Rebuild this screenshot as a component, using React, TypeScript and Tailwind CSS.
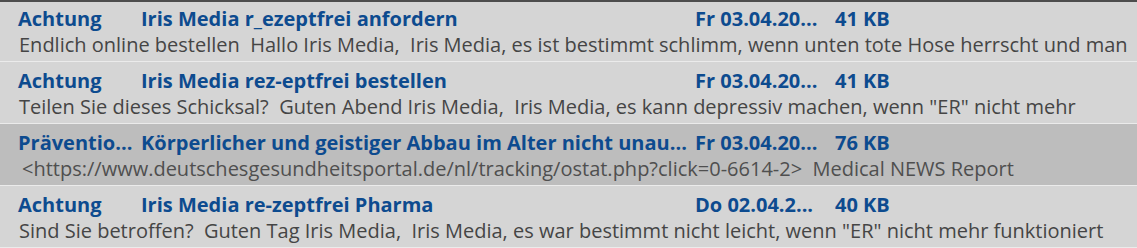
import React from 'react';

type Mail = {
  from: string;
  subject: string;
  date: string;
  size: string;
  preview: string;
  selected?: boolean;
};

const MAILS: Mail[] = [
  {
    from: 'Achtung',
    subject: 'Iris Media r_ezeptfrei anfordern',
    date: 'Fr 03.04.20...',
    size: '41 KB',
    preview:
      'Endlich online bestellen  Hallo Iris Media,  Iris Media, es ist bestimmt schlimm, wenn unten tote Hose herrscht und man',
  },
  {
    from: 'Achtung',
    subject: 'Iris Media rez-eptfrei bestellen',
    date: 'Fr 03.04.20...',
    size: '41 KB',
    preview:
      'Teilen Sie dieses Schicksal?  Guten Abend Iris Media,  Iris Media, es kann depressiv machen, wenn "ER" nicht mehr',
  },
  {
    from: 'Präventio...',
    subject: 'Körperlicher und geistiger Abbau im Alter nicht unau...',
    date: 'Fr 03.04.20...',
    size: '76 KB',
    preview:
      '<https://www.deutschesgesundheitsportal.de/nl/tracking/ostat.php?click=0-6614-2>  Medical NEWS Report',
    selected: true,
  },
  {
    from: 'Achtung',
    subject: 'Iris Media re-zeptfrei Pharma',
    date: 'Do 02.04.2...',
    size: '40 KB',
    preview:
      'Sind Sie betroffen?  Guten Tag Iris Media,  Iris Media, es war bestimmt nicht leicht, wenn "ER" nicht mehr funktioniert',
  },
];

function MailRow({ mail, first }: { mail: Mail; first: boolean }) {
  return (
    <div
      className={
        'h-[62px] shrink-0 border-b border-[#ebebeb] pl-[18px] ' +
        (first ? 'border-t-2 border-t-[#4d4d4d] pt-[4px] ' : 'pt-[6px] ') +
        (mail.selected ? 'bg-[#bdbdbd]' : 'bg-[#d5d5d5]')
      }
    >
      <div className="flex h-[26px] items-center whitespace-nowrap text-[20px] font-bold leading-[26px] text-[#0d4b8f]">
        <span className="w-[123px] shrink-0">{mail.from}</span>
        <span className="w-[554px] shrink-0 overflow-hidden">{mail.subject}</span>
        <span className="w-[140px] shrink-0">{mail.date}</span>
        <span>{mail.size}</span>
      </div>
      <div
        className={
          'h-[26px] overflow-hidden whitespace-pre text-[20px] leading-[26px] ' +
          (mail.selected ? 'pl-[4px] text-[#4f4f4f]' : 'pl-[1px] text-[#454545]')
        }
      >
        {mail.preview}
      </div>
    </div>
  );
}

export default function App() {
  return (
    <div className="flex h-[248px] w-[1137px] flex-col overflow-hidden bg-[#d5d5d5] font-['Open_Sans','Noto_Sans',sans-serif]">
      {MAILS.map((m, i) => (
        <MailRow key={i} mail={m} first={i === 0} />
      ))}
    </div>
  );
}
